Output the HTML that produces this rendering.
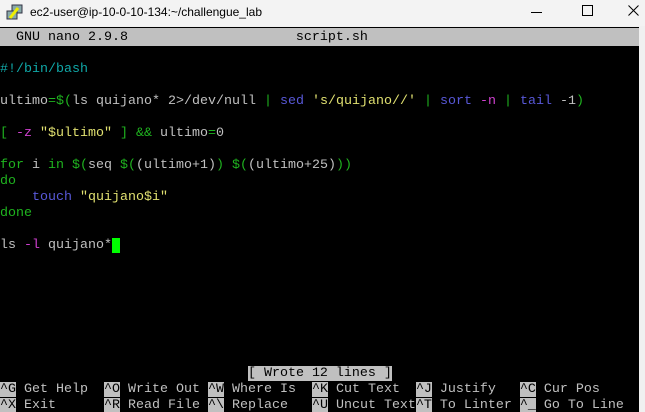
<!DOCTYPE html>
<html><head><meta charset="utf-8"><style>
*{margin:0;padding:0}
body{width:645px;height:412px;overflow:hidden;background:#f0f0f0;position:relative;font-family:"Liberation Sans",sans-serif}
#title{position:absolute;left:0;top:0;width:645px;height:26px;background:#f3f3f3}
#title .t{position:absolute;left:30px;top:5px;font-size:12px;color:#000}
#term{position:absolute;left:0;top:27px;width:639px;height:385px;background:#000;overflow:hidden}
pre{position:absolute;left:0;top:3px;font-family:"Liberation Mono",monospace;font-size:13.33px;line-height:16px;color:#c0c0c0;white-space:pre}
.hd{background:#c0c0c0;color:#000;display:inline-block;width:640px;margin-top:-2px;padding-top:2px}
.r{background:#c0c0c0;color:#000}
.g{color:#1fb31f}.b{color:#5858d8}.y{color:#e0e070}.m{color:#d040d0}.c{color:#10a8a8}
.cur{background:#00ff00;color:#00ff00}
</style></head><body>
<div id="title">
<svg style="position:absolute;left:6px;top:4px" width="18" height="18" viewBox="0 0 18 18"><rect x="6" y="1" width="10" height="8" fill="#8aa" stroke="#334" stroke-width="1"/><rect x="1" y="7" width="10" height="8" fill="#8aa" stroke="#334" stroke-width="1"/><path d="M4 14 L12 4" stroke="#ee0" stroke-width="3"/></svg>
<span class="t">ec2-user@ip-10-0-10-134:~/challengue_lab</span>
<svg style="position:absolute;left:531px;top:12px" width="12" height="2"><rect width="11" height="1" fill="#000"/></svg>
<svg style="position:absolute;left:582px;top:5px" width="12" height="12"><rect x="0.5" y="0.5" width="10" height="10" fill="none" stroke="#000"/></svg>
<svg style="position:absolute;left:628px;top:5px" width="12" height="12"><path d="M0.5 0.5 L10.5 10.5 M10.5 0.5 L0.5 10.5" stroke="#000"/></svg>
</div>
<div id="term"><pre><span class="hd">  GNU nano 2.9.8                     script.sh                                  </span>

<span class="c">#!/bin/bash</span>

ultimo<span class="g">=$(</span>ls quijano* 2&gt;/dev/null <span class="g">|</span> <span class="b">sed</span> <span class="y">'s/quijano//'</span> <span class="g">|</span> <span class="b">sort</span> <span class="m">-n</span> <span class="g">|</span> <span class="b">tail</span> -1<span class="g">)</span>

<span class="g">[</span> <span class="m">-z</span> <span class="y">"$ultimo"</span> <span class="g">]</span> <span class="g">&amp;&amp;</span> ultimo<span class="g">=</span>0

<span class="g">for</span> i <span class="g">in</span> <span class="g">$(</span>seq <span class="g">$(</span>(ultimo+1)<span class="g">)</span> <span class="g">$(</span>(ultimo+25)<span class="g">))</span>
<span class="g">do</span>
    <span class="b">touch</span> <span class="y">"quijano$i"</span>
<span class="g">done</span>

ls <span class="m">-l</span> quijano*<span class="cur"> </span>







                               <span class="r">[ Wrote 12 lines ]</span>
<span class="r">^G</span> Get Help  <span class="r">^O</span> Write Out <span class="r">^W</span> Where Is  <span class="r">^K</span> Cut Text  <span class="r">^J</span> Justify   <span class="r">^C</span> Cur Pos
<span class="r">^X</span> Exit      <span class="r">^R</span> Read File <span class="r">^\</span> Replace   <span class="r">^U</span> Uncut Text<span class="r">^T</span> To Linter <span class="r">^_</span> Go To Line</pre></div>
</body></html>
